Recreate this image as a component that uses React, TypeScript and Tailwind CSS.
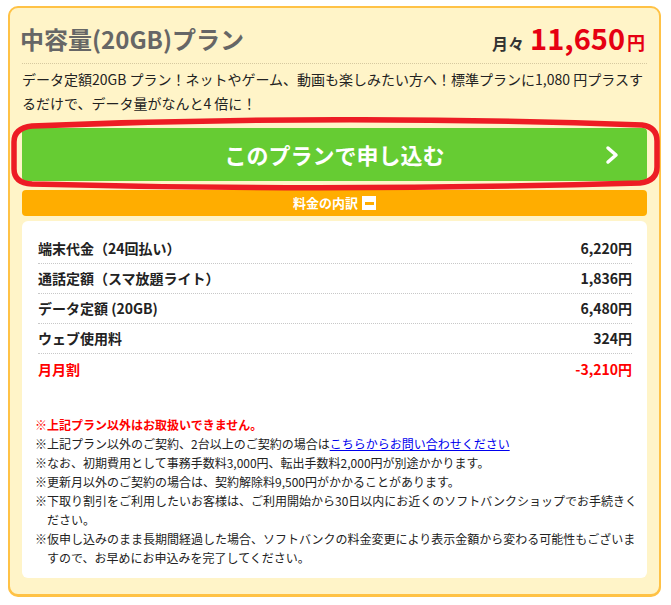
import React from 'react';

const rows = [
	{ label: '端末代金（24回払い）', value: '6,220円' },
	{ label: '通話定額（スマ放題ライト）', value: '1,836円' },
	{ label: 'データ定額 (20GB)', value: '6,480円' },
	{ label: 'ウェブ使用料', value: '324円' },
];

const font = { fontFamily: '"Noto Sans CJK JP", "Noto Sans", sans-serif' };

export default function App() {
	return (
		<div className="min-h-screen bg-white pt-[6px] pl-[8px]" style={font}>
			<div className="relative w-[653px] h-[590px] rounded-[10px] border-2 border-[#ffc246] bg-[#fff4c8] px-[12px] shadow-[0_1px_0_#ffc246]">
				{/* Header */}
				<div className="flex items-center justify-between pt-[14px] pb-[7px] border-b border-dotted border-[#d6c9a0]">
					<h1 className="text-[24px] leading-[30px] font-bold text-[#666666] -ml-[2px]">中容量(20GB)プラン</h1>
					<div className="flex items-baseline font-bold mr-[2px]">
						<span className="text-[16px] text-[#333333] mr-[6px]">月々</span>
						<span className="text-[29px] leading-[30px] text-[#e60012]">11,650</span>
						<span className="text-[18px] text-[#e60012] ml-[2px]">円</span>
					</div>
				</div>

				{/* Description */}
				<p className="mt-[3px] text-[14px] leading-[24px] text-[#222222]">
					データ定額20GB プラン！ネットやゲーム、動画も楽しみたい方へ！標準プランに1,080 円プラスするだけで、データ量がなんと4 倍に！
				</p>

				{/* Apply button */}
				<div className="relative mt-[13px]">
					<button className="flex h-[53px] w-full items-center justify-center rounded-[4px] bg-[#66cc33] text-[22px] font-bold text-white relative">
						このプランで申し込む
						<svg className="absolute right-[28px] top-[17px]" width="14" height="20" viewBox="0 0 14 20">
							<polyline points="3,3 11,10 3,17" fill="none" stroke="white" strokeWidth="3.5" strokeLinecap="round" strokeLinejoin="round" />
						</svg>
					</button>
					{/* hand drawn red mark */}
					<svg className="absolute -left-[12px] -top-[11px] pointer-events-none" width="652" height="74" viewBox="0 0 652 74">
						<path
							d="M 22 9 Q 326 -3 632 8 Q 647 10 647 24 L 647 50 Q 647 64 630 66 Q 326 75 22 67 Q 4 66 4 52 L 4 25 Q 4 11 22 9 Z"
							fill="none"
							stroke="#ed1c24"
							strokeWidth="5.5"
						/>
					</svg>
				</div>

				{/* Breakdown header */}
				<div className="mt-[9px] flex h-[26px] items-center justify-center rounded-[4px] bg-[#ffad00] text-[13px] font-bold text-white">
					料金の内訳
					<span className="ml-[4px] flex h-[14px] w-[14px] items-center justify-center bg-white">
						<span className="block h-[3px] w-[9px] bg-[#ffad00]" />
					</span>
				</div>

				{/* Breakdown box */}
				<div className="mt-[5px] h-[357px] rounded-[6px] bg-white pt-[13px]">
					<div className="px-[15px] pl-[16px]">
						{rows.map(row => (
							<div
								key={row.label}
								className="flex h-[30px] items-center justify-between border-b border-dotted border-[#c8c8c8] text-[14px] font-bold text-[#222222]"
							>
								<span>{row.label}</span>
								<span>{row.value}</span>
							</div>
						))}
						<div className="flex h-[30px] items-center justify-between text-[14px] font-bold text-[#ff0000]">
							<span>月月割</span>
							<span>-3,210円</span>
						</div>
					</div>

					<ul className="mt-[31px] pl-[13px] pr-[6px] text-[12px] leading-[19px] text-[#222222]">
						<li className="pl-[1em] -indent-[1em] font-bold text-[#ff0000]">※上記プラン以外はお取扱いできません。</li>
						<li className="pl-[1em] -indent-[1em]">
							※上記プラン以外のご契約、2台以上のご契約の場合は
							<a href="#" className="text-[#0000ee] underline">こちらからお問い合わせください</a>
						</li>
						<li className="pl-[1em] -indent-[1em]">※なお、初期費用として事務手数料3,000円、転出手数料2,000円が別途かかります。</li>
						<li className="pl-[1em] -indent-[1em]">※更新月以外のご契約の場合は、契約解除料9,500円がかかることがあります。</li>
						<li className="pl-[1em] -indent-[1em]">
							※下取り割引をご利用したいお客様は、ご利用開始から30日以内にお近くのソフトバンクショップでお手続きください。
						</li>
						<li className="pl-[1em] -indent-[1em]">
							※仮申し込みのまま長期間経過した場合、ソフトバンクの料金変更により表示金額から変わる可能性もございますので、お早めにお申込みを完了してください。
						</li>
					</ul>
				</div>
			</div>
		</div>
	);
}
